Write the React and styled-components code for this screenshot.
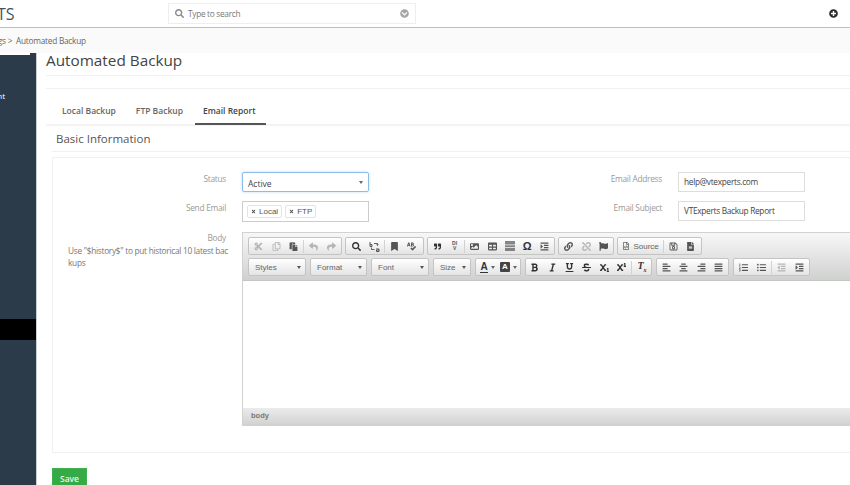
import React from 'react'
import styled, { createGlobalStyle } from 'styled-components'
import {
  FaCut, FaRegCopy, FaPaste, FaReply, FaShare, FaSearch, FaBookmark, FaSpellCheck,
  FaQuoteRight, FaImage, FaTable, FaIndent, FaLink, FaUnlink, FaFlag,
  FaRegFileCode, FaRegSave, FaFileAlt, FaBold, FaItalic, FaUnderline, FaStrikethrough, FaSubscript,
  FaSuperscript, FaAlignLeft, FaAlignCenter, FaAlignRight, FaAlignJustify,
  FaListOl, FaListUl, FaOutdent, FaPlusCircle, FaChevronCircleDown, FaTimes,
} from 'react-icons/fa'

const GlobalStyle = createGlobalStyle`
  html, body {
    margin: 0;
    background: #fff;
    font-family: "Open Sans", sans-serif;
    font-size: 8px;
    color: #555;
  }
  * { box-sizing: border-box; }
`

// CKEditor glyphs the icon packs have no close match for
const ReplaceIcon = () => (
  <svg width="11" height="11" viewBox="0 0 11 11" fill="none" stroke="currentColor">
    <path d="M1 1v4.500M1 3.500h2v2H1" strokeWidth="1" />
    <path d="M7 8h3v2.500H7.500V9H10" strokeWidth="1" />
    <path d="M5 2.500h3.500v2M7.500 3.500l1 1 1-1M5.500 8.500H2.500v-2" strokeWidth="0.9" />
  </svg>
)

const HrIcon = () => (
  <svg width="10" height="10" viewBox="0 0 10 10" fill="currentColor">
    <rect x="0" y="0" width="10" height="3.500" opacity="0.7" />
    <rect x="0" y="4.500" width="10" height="1.200" />
    <rect x="0" y="6.800" width="10" height="3.200" opacity="0.7" />
  </svg>
)

export default function App() {
  return (
    <Page>
      <GlobalStyle />
      <TopBar>
        <Logo>VTEXPERTS</Logo>
        <SearchBox>
          <FaSearch size={9} color="#8a8a8a" />
          <SearchText>Type to search</SearchText>
          <FaChevronCircleDown size={9} color="#a5a5a5" />
        </SearchBox>
        <FaPlusCircle size={9} color="#2b2b2b" />
      </TopBar>
      <Crumbs>Settings &gt;&nbsp; Automated Backup</Crumbs>
      <Body>
        <Sidebar>
          <SideItem>Account</SideItem>
          <SideActive />
        </Sidebar>
        <Main>
          <Title>Automated Backup</Title>
          <Tabs>
            <Tab>Local Backup</Tab>
            <Tab>FTP Backup</Tab>
            <Tab $active>Email Report</Tab>
          </Tabs>
          <SectionTitle>Basic Information</SectionTitle>
          <Panel>
            <FormGrid>
              <Label>Status</Label>
              <SelectBox>
                Active
                <Caret />
              </SelectBox>
              <Label>Email Address</Label>
              <TextBox>help@vtexperts.com</TextBox>

              <Label>Send Email</Label>
              <TagBox>
                <Tag><FaTimes size={5} />Local</Tag>
                <Tag><FaTimes size={5} />FTP</Tag>
              </TagBox>
              <Label>Email Subject</Label>
              <TextBox>VTExperts Backup Report</TextBox>

              <BodyLabel>
                <BodyTitle>Body</BodyTitle>
                <BodyHelp>Use "$history$" to put historical 10 latest bac<br />kups</BodyHelp>
              </BodyLabel>
              <Editor>
                <Toolbar>
                  <ToolRow $gap={3}>
                    <Group>
                      <Tool $off><FaCut /></Tool>
                      <Tool $off><FaRegCopy /></Tool>
                      <Tool><FaPaste /></Tool>
                      <Sep />
                      <Tool $off><FaReply /></Tool>
                      <Tool $off><FaShare /></Tool>
                    </Group>
                    <Group $pad={2}>
                      <Tool $dark><FaSearch /></Tool>
                      <Tool><ReplaceIcon /></Tool>
                      <Sep />
                      <Tool><FaBookmark /></Tool>
                      <Tool><FaSpellCheck /></Tool>
                    </Group>
                    <Group>
                      <Tool $dark><FaQuoteRight size={7} /></Tool>
                      <Tool><DivGlyph>DI<br />V</DivGlyph></Tool>
                      <Sep />
                      <Tool><FaImage /></Tool>
                      <Tool><FaTable /></Tool>
                      <Tool><HrIcon /></Tool>
                      <Omega>Ω</Omega>
                      <Tool><FaIndent /></Tool>
                    </Group>
                    <Group>
                      <Tool><FaLink /></Tool>
                      <Tool $off><FaUnlink /></Tool>
                      <Tool><FaFlag /></Tool>
                    </Group>
                    <Group>
                      <SourceTool><FaRegFileCode />Source</SourceTool>
                      <Sep />
                      <Tool><FaRegSave /></Tool>
                      <Tool><FaFileAlt /></Tool>
                    </Group>
                  </ToolRow>
                  <ToolRow $gap={4}>
                    <Combo $w={58}>Styles</Combo>
                    <Combo $w={57}>Format</Combo>
                    <Combo $w={58}>Font</Combo>
                    <Combo $w={38}>Size</Combo>
                    <Group>
                      <ColorTool><TextColor>A</TextColor><Caret /></ColorTool>
                      <ColorTool><BackColor>A</BackColor><Caret /></ColorTool>
                    </Group>
                    <Group $pad={0}>
                      <Tool $dark><FaBold /></Tool>
                      <Tool $dark><FaItalic /></Tool>
                      <Tool $dark><FaUnderline /></Tool>
                      <Tool $dark><FaStrikethrough /></Tool>
                      <Tool $dark><FaSubscript /></Tool>
                      <Tool $dark><FaSuperscript /></Tool>
                      <Sep />
                      <Tool $dark><ClearGlyph>T<sub>x</sub></ClearGlyph></Tool>
                    </Group>
                    <Group>
                      <Tool><FaAlignLeft /></Tool>
                      <Tool><FaAlignCenter /></Tool>
                      <Tool><FaAlignRight /></Tool>
                      <Tool><FaAlignJustify /></Tool>
                    </Group>
                    <Group>
                      <Tool><FaListOl /></Tool>
                      <Tool><FaListUl /></Tool>
                      <Sep />
                      <Tool $off><FaOutdent /></Tool>
                      <Tool><FaIndent /></Tool>
                    </Group>
                  </ToolRow>
                </Toolbar>
                <EditArea />
                <PathBar>body</PathBar>
              </Editor>
            </FormGrid>
          </Panel>
          <SaveButton>Save</SaveButton>
        </Main>
      </Body>
    </Page>
  )
}

const Page = styled.div`
  width: 850px;
  height: 485px;
  overflow: hidden;
`

const TopBar = styled.header`
  height: 28px;
  display: flex;
  align-items: center;
  padding-right: 12px;
  border-bottom: 1px solid #f3ab9c;
  background: #fff;
`

const Logo = styled.div`
  flex: 0 0 236px;
  margin-left: -68px;
  font-size: 16px;
  line-height: 1;
  color: #45525e;
`

const SearchBox = styled.div`
  width: 248px;
  height: 21px;
  display: flex;
  align-items: center;
  padding: 0 6px;
  border: 1px solid #eeeeee;
  margin-right: auto;
`

const SearchText = styled.span`
  flex: 1;
  margin-left: 4px;
  color: #777;
  font-size: 8.3px;
  letter-spacing: -0.3px;
`

const Crumbs = styled.div`
  height: 25px;
  width: 877px;
  margin-left: -27px;
  padding-left: 4px;
  line-height: 25px;
  background: #fafafa;
  color: #666;
  font-size: 8.3px;
  letter-spacing: -0.25px;
`

const Body = styled.div`
  display: flex;
  height: 432px;
`

const Sidebar = styled.nav`
  position: relative;
  flex: 0 0 36px;
  background: #2c3b49;
  overflow: hidden;
  color: #fff;
  display: flex;
  flex-direction: column;

  &::before {
    content: '';
    position: absolute;
    top: 0;
    left: 0;
    width: 30px;
    height: 2px;
    background: #fff;
  }
`

const SideItem = styled.div`
  margin-top: 33px;
  height: 20px;
  line-height: 20px;
  font-size: 8px;
  display: flex;
  justify-content: flex-end;
  padding-right: 31px;
  white-space: nowrap;
`

const SideActive = styled.div`
  margin-top: 213px;
  height: 21px;
  background: #000;
`

const Main = styled.main`
  flex: 1;
  min-width: 0;
  overflow: hidden;
  padding-left: 9px;
  border-left: 1px solid #c9ced2;
`

const Title = styled.h1`
  margin: 0 0 12px;
  height: 23px;
  line-height: 15px;
  font-size: 15.3px;
  font-weight: 400;
  color: #444;
  border-bottom: 1px solid #f1f1f1;
`

const Tabs = styled.div`
  height: 38px;
  display: flex;
  padding: 6px 0 0 6px;
  border-top: 1px solid #f1f1f1;
  border-bottom: 2px solid #f3f3f3;
`

const Tab = styled.div`
  padding: 10px 10px 0 ${p => (p.$active ? '8px' : '10px')};
  margin-left: ${p => (p.$active ? '2px' : '0')};
  height: 30px;
  font-size: 8.5px;
  font-weight: 600;
  color: ${p => (p.$active ? '#444' : '#666')};
  border-bottom: ${p => (p.$active ? '2px solid #555' : 'none')};
`

const SectionTitle = styled.h2`
  margin: 0 0 5px 6px;
  padding: 5px 0 4px 4px;
  font-size: 11.5px;
  line-height: 16px;
  font-weight: 400;
  color: #555;
  border-bottom: 1px solid #f1f1f1;
`

const Panel = styled.section`
  width: 830px;
  margin-left: 6px;
  height: 296px;
  border: 1px solid #f1f1f1;
  padding-top: 14px;
`

const FormGrid = styled.div`
  display: grid;
  grid-template-columns: 173px 127px 277px 127px;
  grid-auto-rows: min-content;
  column-gap: 16px;
  row-gap: 9px;
`

const Label = styled.label`
  padding-top: 1px;
  text-align: right;
  color: #999;
  font-size: 8.3px;
  letter-spacing: -0.25px;
  line-height: 11px;
`

const BodyLabel = styled.div`
  font-size: 8.3px;
  letter-spacing: -0.28px;
  line-height: 12px;
`

const BodyTitle = styled.div`
  text-align: right;
  color: #999;
  padding-top: 1px;
`

const BodyHelp = styled.div`
  margin-top: 1px;
  padding-left: 15px;
  white-space: nowrap;
  color: #777;
`

const TextBox = styled.div`
  height: 20px;
  line-height: 18px;
  padding-left: 5px;
  border: 1px solid #dddddd;
  color: #444;
  font-size: 8.3px;
  letter-spacing: -0.3px;
`

const SelectBox = styled(TextBox)`
  position: relative;
  border-color: #8dbce6;
  box-shadow: 0 0 3px #bcd9f3;
  border-radius: 2px;
  line-height: 21px;
  font-size: 8.5px;
  letter-spacing: 0;
`

const Caret = styled.i`
  display: inline-block;
  width: 0;
  height: 0;
  border-left: 2px solid transparent;
  border-right: 2px solid transparent;
  border-top: 3px solid #666;
  margin-left: 2px;

  ${SelectBox} & {
    position: absolute;
    right: 5px;
    top: 8px;
  }
`

const TagBox = styled.div`
  height: 21px;
  display: flex;
  align-items: center;
  gap: 3px;
  padding: 0 4px;
  border: 1px solid #cccccc;
`

const Tag = styled.span`
  height: 13px;
  display: flex;
  align-items: center;
  gap: 3px;
  padding: 0 3px;
  border: 1px solid #e3e3e3;
  border-radius: 2px;
  color: #555;
  font-family: "Liberation Sans", Arial, sans-serif;
  font-size: 8px;
`

const Editor = styled.div`
  grid-column: 2 / span 3;
  width: 640px;
  margin-top: 1px;
  border: 1px solid #d1d1d1;
  border-bottom-width: 2px;
`

const Toolbar = styled.div`
  height: 48px;
  padding: 4px 0 0 5px;
  display: flex;
  flex-direction: column;
  gap: 3px;
  background: linear-gradient(#f7f7f7, #cfd1cf);
  border-bottom: 1px solid #c4c4c4;
`

const ToolRow = styled.div`
  display: flex;
  gap: ${p => p.$gap}px;
`

const Group = styled.div`
  height: 18px;
  display: flex;
  align-items: center;
  padding: 0 ${p => p.$pad ?? 1}px;
  background: linear-gradient(#fff, #e4e4e4);
  border: 1px solid #c4c4c4;
  border-radius: 2px;
`

const Tool = styled.span`
  width: 17.4px;
  height: 16px;
  display: flex;
  align-items: center;
  justify-content: center;
  font-size: 9px;
  font-weight: 700;
  font-family: "Liberation Sans", Arial, sans-serif;
  color: ${p => (p.$off ? '#b5b5b5' : p.$dark ? '#333' : '#555')};
`

const Omega = styled(Tool)`
  font-size: 11px;
  color: #333;
`

const DivGlyph = styled.span`
  font-size: 5px;
  line-height: 5px;
  text-align: center;
`

const ClearGlyph = styled.span`
  font-family: "Liberation Serif", serif;
  font-style: italic;
  font-size: 10px;
  line-height: 1;

  sub {
    font-size: 6px;
  }
`

const SourceTool = styled(Tool)`
  width: auto;
  gap: 3px;
  padding: 0 3px;
  font-weight: 400;
  color: #666;
  font-size: 8px;
`

const ColorTool = styled(Tool)`
  width: 21px;
  gap: 1px;
`

const TextColor = styled.span`
  font-size: 10px;
  line-height: 10px;
  color: #333;
  border-bottom: 1.5px solid #333;
`

const BackColor = styled.span`
  width: 10px;
  height: 10px;
  font-size: 8px;
  line-height: 10px;
  text-align: center;
  border-radius: 1px;
  background: #444;
  color: #fff;
`

const Combo = styled(Group)`
  position: relative;
  width: ${p => p.$w}px;
  padding-left: 6px;
  font-family: "Liberation Sans", Arial, sans-serif;
  font-size: 8px;
  color: #666;

  &::after {
    content: '';
    position: absolute;
    right: 4px;
    top: 7px;
    border-left: 2px solid transparent;
    border-right: 2px solid transparent;
    border-top: 3px solid #555;
  }
`

const Sep = styled.span`
  width: 1px;
  height: 13px;
  background: #d2d2d2;
  margin: 0 1px;
`

const EditArea = styled.div`
  height: 127px;
  background: #fff;
`

const PathBar = styled.div`
  height: 16px;
  line-height: 16px;
  padding-left: 8px;
  background: linear-gradient(#ebebeb, #d2d4d2);
  font-family: "Liberation Sans", Arial, sans-serif;
  font-size: 7.5px;
  font-weight: 700;
  color: #777;
`

const SaveButton = styled.button`
  display: block;
  width: 35px;
  height: 20px;
  margin: 15px 0 0 6px;
  padding: 0;
  background: #35aa47;
  border: 1px solid #3faf50;
  color: #e6f5e8;
  font-family: "Open Sans", sans-serif;
  font-size: 8.5px;
  font-weight: 600;
`
